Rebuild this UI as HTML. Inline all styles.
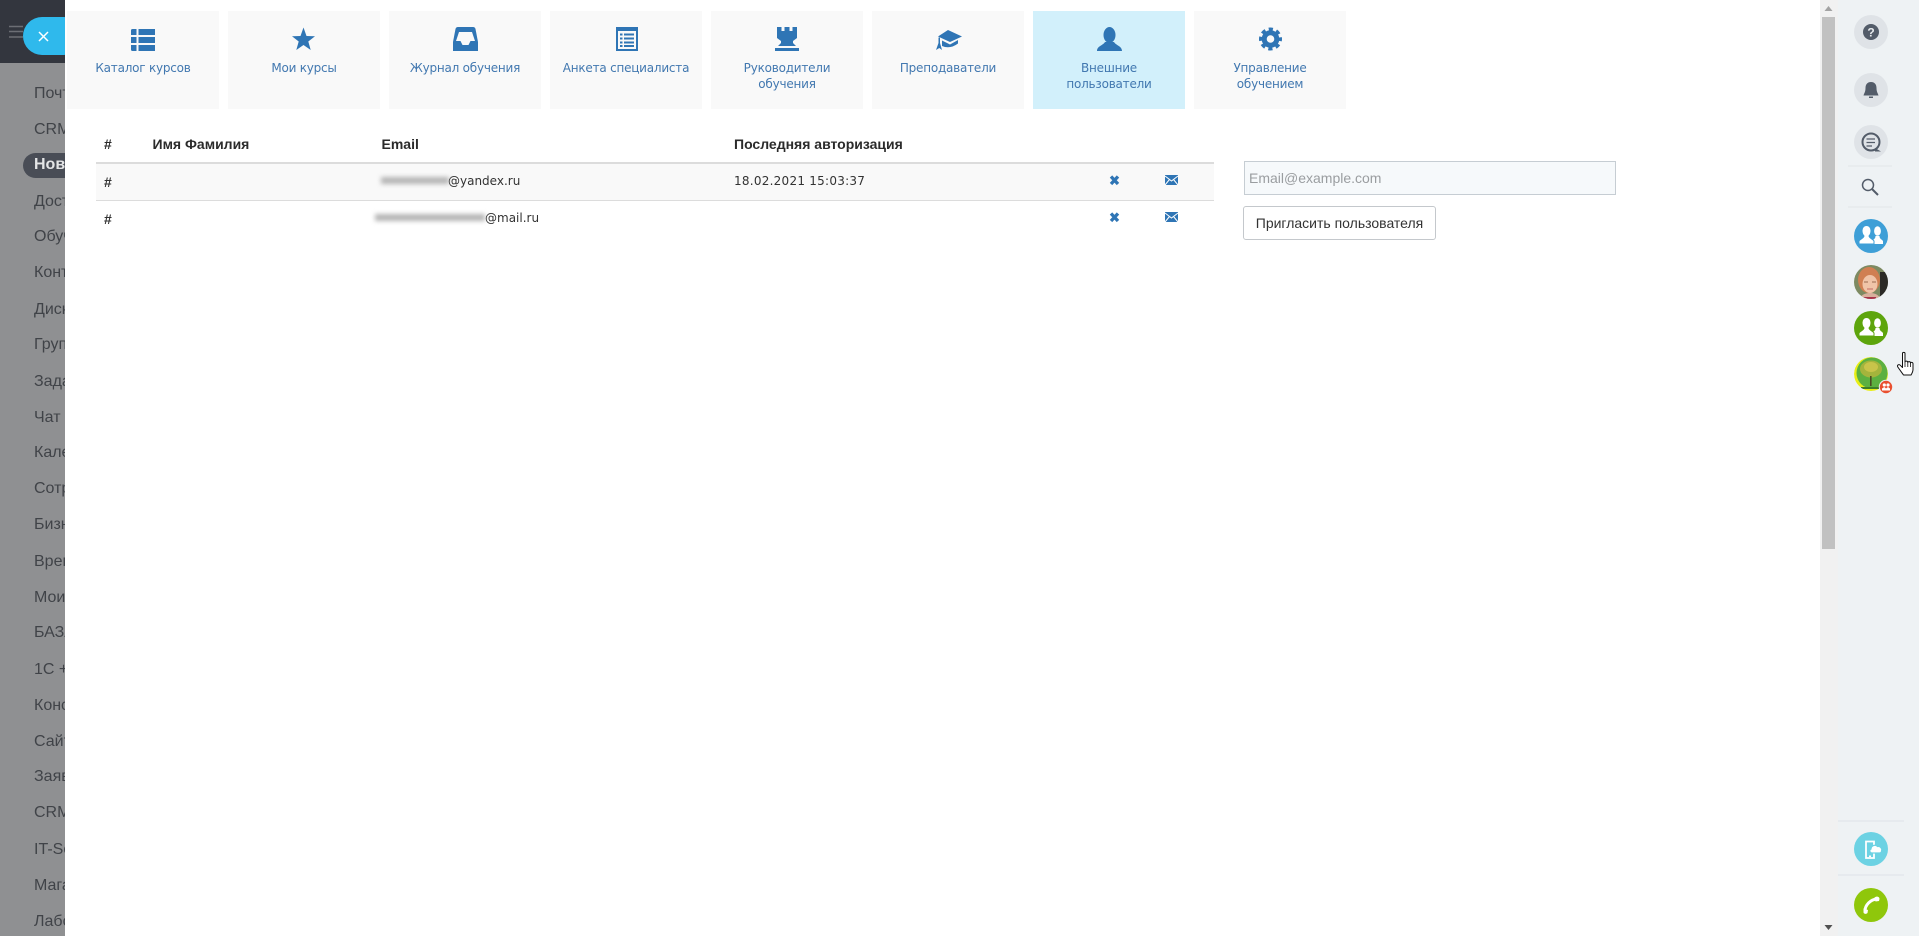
<!DOCTYPE html>
<html lang="ru">
<head>
<meta charset="utf-8">
<title>Внешние пользователи</title>
<style>
html,body{margin:0;padding:0;width:1919px;height:936px;overflow:hidden;background:#fff;}
body{position:relative;font-family:"Liberation Sans","Noto Sans CJK SC",sans-serif;}
.a{position:absolute;}
#left{left:0;top:0;width:65px;height:936px;background:#8f9092;overflow:hidden;}
#lhead{left:0;top:0;width:65px;height:63px;background:#33363e;}
.m{position:absolute;left:34px;font-size:16px;line-height:22px;color:#404348;white-space:nowrap;}
#pill{left:23px;top:153px;width:60px;height:25px;border-radius:13px;background:#494d56;}
#close{left:23px;top:17px;width:60px;height:38px;border-radius:19px;background:#2fb9ec;}
#panel{left:65px;top:0;width:1755px;height:936px;background:#fff;}
.t{position:absolute;top:11px;width:152px;height:98px;background:#f9f9f9;}
.t.on{background:#d2f0fb;}
.t span{position:absolute;left:0;right:0;top:49px;text-align:center;font-family:"DejaVu Sans",sans-serif;font-size:12px;letter-spacing:-.22px;line-height:16px;color:#4278b0;}
.h{position:absolute;top:136px;font-weight:bold;font-size:14px;line-height:17px;color:#2b2b2b;white-space:nowrap;}
.d{position:absolute;font-family:"DejaVu Sans",sans-serif;font-size:12px;line-height:16px;color:#333;white-space:nowrap;}
.n{position:absolute;left:104px;font-weight:bold;font-size:14px;line-height:17px;color:#333;}
.blur{position:absolute;height:9px;background:#b5b5b5;filter:blur(2.5px);}
#scroll{left:1820px;top:0;width:18px;height:936px;background:#f1f1f1;}
#thumb{left:1822px;top:17px;width:13px;height:532px;background:#c1c1c1;}
#right{left:1838px;top:0;width:81px;height:936px;background:#eef2f4;}
#input{left:1244px;top:161px;width:370px;height:32px;border:1px solid #c6cdd3;background:#f6f9fb;font-size:14px;line-height:32px;color:#9a9da0;text-indent:4px;}
#btn{left:1243px;top:206px;width:191px;height:32px;border:1px solid #c4c8cc;border-radius:3px;background:#fff;font-size:14px;line-height:32px;color:#333;text-align:center;}
svg{position:absolute;left:0;top:0;}
</style>
</head>
<body>
<div id="left" class="a">
  <div class="m" style="top:83px">Почта</div>
  <div class="m" style="top:119px">CRM</div>
  <div id="pill" class="a"></div>
  <div class="m" style="top:154px;color:#e4e5e6;font-weight:bold">Новости</div>
  <div class="m" style="top:191px">Доставка</div>
  <div class="m" style="top:226px">Обучение</div>
  <div class="m" style="top:262px">Контакты</div>
  <div class="m" style="top:299px">Диск</div>
  <div class="m" style="top:334px">Группы</div>
  <div class="m" style="top:371px">Задачи</div>
  <div class="m" style="top:407px">Чат и звонки</div>
  <div class="m" style="top:442px">Календарь</div>
  <div class="m" style="top:478px">Сотрудники</div>
  <div class="m" style="top:514px">Бизнес</div>
  <div class="m" style="top:551px">Время</div>
  <div class="m" style="top:587px">Мои</div>
  <div class="m" style="top:622px">БАЗА</div>
  <div class="m" style="top:659px">1С + CRM</div>
  <div class="m" style="top:695px">Конструктор</div>
  <div class="m" style="top:731px">Сайты</div>
  <div class="m" style="top:766px">Заявки</div>
  <div class="m" style="top:802px">CRM</div>
  <div class="m" style="top:839px">IT-Solution</div>
  <div class="m" style="top:875px">Магазин</div>
  <div class="m" style="top:911px">Лаборатория</div>
</div>
<div id="lhead" class="a"></div>
<div id="close" class="a"></div>

<div id="panel" class="a"></div>

<div class="t" style="left:67px"><span>Каталог курсов</span></div>
<div class="t" style="left:228px"><span>Мои курсы</span></div>
<div class="t" style="left:389px"><span>Журнал обучения</span></div>
<div class="t" style="left:550px"><span>Анкета специалиста</span></div>
<div class="t" style="left:711px"><span>Руководители<br>обучения</span></div>
<div class="t" style="left:872px"><span>Преподаватели</span></div>
<div class="t on" style="left:1033px"><span>Внешние<br>пользователи</span></div>
<div class="t" style="left:1194px"><span>Управление<br>обучением</span></div>

<div class="a" style="left:96px;top:163px;width:1118px;height:37px;background:#f9f9f9"></div>
<div class="a" style="left:96px;top:162px;width:1118px;height:2px;background:#dcdcdc"></div>
<div class="a" style="left:96px;top:200px;width:1118px;height:1px;background:#dcdcdc"></div>

<div class="h" style="left:104px">#</div>
<div class="h" style="left:152.500px">Имя Фамилия</div>
<div class="h" style="left:381.500px">Email</div>
<div class="h" style="left:734px">Последняя авторизация</div>

<div class="n" style="top:174px">#</div>
<div class="n" style="top:211px">#</div>

<div class="blur" style="left:381px;top:177px;width:68px;height:7px"></div>
<div class="d" style="left:448px;top:173px">@yandex.ru</div>
<div class="d" style="left:734px;top:173px;letter-spacing:.25px">18.02.2021 15:03:37</div>

<div class="blur" style="left:375px;top:214px;width:110px;height:7px"></div>
<div class="d" style="left:485px;top:210px">@mail.ru</div>

<div id="input" class="a">Email@example.com</div>
<div id="btn" class="a">Пригласить пользователя</div>

<div id="scroll" class="a"></div>
<div id="thumb" class="a"></div>
<div id="right" class="a"></div>

<svg width="1919" height="936" viewBox="0 0 1919 936" xmlns="http://www.w3.org/2000/svg">
  <!-- hamburger -->
  <path d="M9 26.5H23M9 31.5H23M9 37H23" stroke="#6c6e74" stroke-width="1.6" fill="none"/>
  <!-- close -->
  <path d="M39 32L48 41M48 32L39 41" stroke="#fff" stroke-width="1.5" fill="none"/>

  <g fill="#2f75b5">
    <!-- list -->
    <path d="M131 30.5a1.5 1.5 0 0 1 1.5-1.5h4v6h-5.500zM131 37h5.500v6H131zM131 45h5.500v6h-4a1.500 1.500 0 0 1-1.500-1.500zM138.500 29H155v6h-16.500zM138.500 37H155v6h-16.500zM138.500 45H155v6h-16.500z"/>
    <!-- star -->
    <path d="M303.500 27.500L306.500 36L315 36.300L308.300 41.500L310.700 50L303.500 45L296.300 50L298.700 41.500L292 36.300L300.500 36Z"/>
    <!-- inbox -->
    <path d="M458 27H473Q475 27 475.500 29L478 42V51H453V42L455.500 29Q456 27 458 27Z"/>
    <!-- form -->
    <path d="M616 27H638V51H616Z"/>
    <!-- rook -->
    <path d="M777 27h4.500v4h3v-4h5v4h3v-4H797v11l-4 3v2l3 3H778l3-3v-2l-4-3Z"/>
    <path d="M775 48H799V51H775Z"/>
    <!-- cap -->
    <path d="M948 30L962 36.500L950 42L938 36.500Z"/>
    <path d="M942 40.500L950 44.500L958 40V43.500Q950 49.500 942 46Z"/>
    <path d="M938.500 37.500H940V43L942 50L939.300 48L936 50L938.500 43Z"/>
    <!-- user -->
    <ellipse cx="1109.500" cy="35" rx="6" ry="8"/>
    <path d="M1097 51C1097 46 1103 45.500 1105 42H1114C1116 45.500 1122 46 1122 51Z"/>
  </g>
  <!-- inbox inner -->
  <path d="M459 32H472L475 41H470.500L468.500 45H462.500L460.500 41H456Z" fill="#f9f9f9"/>
  <!-- form inner -->
  <path d="M618 31H636V49H618Z" fill="#f9f9f9"/>
  <path d="M620 33.500H622.500V35.500H620zM624 33.500H634V35.500H624zM620 37.500H622.500V39.500H620zM624 37.500H634V39.500H624zM620 41.500H622.500V43.500H620zM624 41.500H634V43.500H624zM620 45H622.500V47H620zM624 45H634V47H624z" fill="#2f75b5"/>
  <!-- cog -->
  <circle cx="1270.500" cy="39" r="6.300" fill="none" stroke="#2f75b5" stroke-width="5"/>
  <circle cx="1270.500" cy="39" r="9.800" fill="none" stroke="#2f75b5" stroke-width="3.400" stroke-dasharray="4.200 3.500" stroke-dashoffset="2.100"/>

  <!-- row actions -->
  <g stroke="#2f75b5" stroke-width="3.300" fill="none">
    <path d="M1111 176.500L1118 184M1118 176.500L1111 184"/>
    <path d="M1111 213.500L1118 221M1118 213.500L1111 221"/>
  </g>
  <g>
    <rect x="1165" y="175" width="13" height="10" fill="#2f75b5"/>
    <path d="M1165 176L1171.500 181L1178 176M1165 185L1169.500 179.500M1178 185L1173.500 179.500" stroke="#fff" stroke-width="1" fill="none"/>
    <rect x="1165" y="212" width="13" height="10" fill="#2f75b5"/>
    <path d="M1165 213L1171.500 218L1178 213M1165 222L1169.500 216.500M1178 222L1173.500 216.500" stroke="#fff" stroke-width="1" fill="none"/>
  </g>

  <!-- scrollbar arrows -->
  <path d="M1828.500 6L1832.500 11H1824.500Z" fill="#a3a3a3"/>
  <path d="M1824.500 925H1832.500L1828.500 930Z" fill="#505050"/>

  <!-- right panel -->
  <g fill="#dfe3e7">
    <circle cx="1871" cy="32" r="17"/>
    <circle cx="1871" cy="90" r="17"/>
    <circle cx="1871" cy="142" r="17"/>
  </g>
  <circle cx="1871" cy="32" r="8" fill="#535c69"/>
  <text x="1871" y="36.500" text-anchor="middle" font-family="Liberation Sans, sans-serif" font-weight="bold" font-size="12" fill="#e8ebee">?</text>
  <path d="M1871 82C1875 82 1876.500 85 1876.500 88C1876.500 92 1878 93.500 1878.500 95.500H1863.500C1864 93.500 1865.500 92 1865.500 88C1865.500 85 1867 82 1871 82Z" fill="#535c69"/>
  <rect x="1869" y="96.500" width="4" height="1.500" fill="#535c69"/>
  <circle cx="1871" cy="142" r="8.500" fill="none" stroke="#535c69" stroke-width="2"/>
  <path d="M1875 148L1881 151.500L1875 151.500Z" fill="#535c69"/>
  <path d="M1866.500 139H1875M1866.500 142.500H1875M1866.500 146H1872" stroke="#535c69" stroke-width="1.300" fill="none"/>
  <circle cx="1868" cy="185" r="5.500" fill="none" stroke="#535c69" stroke-width="1.500"/>
  <path d="M1872 189L1878 195" stroke="#535c69" stroke-width="2" fill="none"/>
  <path d="M1848 166H1892M1848 207H1892" stroke="#e1e5e9" stroke-width="1"/>
  <path d="M1838 821H1904M1838 875H1904" stroke="#dde2e7" stroke-width="1"/>

  <!-- blue group -->
  <circle cx="1871" cy="236" r="17" fill="#3e9fd7"/>
  <g fill="#fff">
    <ellipse cx="1877.500" cy="231" rx="3.400" ry="4.800"/>
    <path d="M1872 244V241C1873 239.500 1875.500 239 1875.500 236H1879.500C1879.500 239 1882 239.500 1883 241V244Z"/>
    <path d="M1859 244V241C1860 239 1863.500 238.500 1864 236C1862.500 234.500 1862 232.500 1862 230.500C1862 227.500 1864 225.500 1866.500 225.500C1869 225.500 1871 227.500 1871 230.500C1871 232.500 1870.500 234.500 1869 236C1869.500 238.500 1873 239 1874 241V244Z" stroke="#3e9fd7" stroke-width="1"/>
  </g>

  <!-- photo avatar -->
  <defs>
    <clipPath id="c1"><circle cx="1871" cy="282" r="17"/></clipPath>
    <clipPath id="c2"><circle cx="1871" cy="374" r="17"/></clipPath>
  </defs>
  <g clip-path="url(#c1)">
    <rect x="1854" y="265" width="34" height="34" fill="#7d8a62"/>
    <rect x="1880" y="272" width="8" height="27" fill="#2b2a26"/>
    <ellipse cx="1869" cy="280" rx="11" ry="13" fill="#d07f52"/>
    <ellipse cx="1870" cy="284" rx="7.500" ry="9" fill="#f0c4a8"/>
    <path d="M1864 282H1868M1872 282H1876" stroke="#9a6a50" stroke-width="1"/>
    <path d="M1867 289H1873" stroke="#c26a62" stroke-width="1"/>
    <path d="M1859 299C1862 294 1866 293 1870 293C1874 293 1878 294 1881 299Z" fill="#d8b09c"/>
    <rect x="1862" y="297" width="14" height="2" fill="#a8344a"/>
  </g>

  <!-- green group -->
  <circle cx="1871" cy="328" r="17" fill="#5da50c"/>
  <g fill="#fff">
    <ellipse cx="1877.500" cy="323" rx="3.400" ry="4.800"/>
    <path d="M1872 336V333C1873 331.500 1875.500 331 1875.500 328H1879.500C1879.500 331 1882 331.500 1883 333V336Z"/>
    <path d="M1859 336V333C1860 331 1863.500 330.500 1864 328C1862.500 326.500 1862 324.500 1862 322.500C1862 319.500 1864 317.500 1866.500 317.500C1869 317.500 1871 319.500 1871 322.500C1871 324.500 1870.500 326.500 1869 328C1869.500 330.500 1873 331 1874 333V336Z" stroke="#5da50c" stroke-width="1"/>
  </g>

  <!-- tree avatar -->
  <g clip-path="url(#c2)">
    <circle cx="1871" cy="374" r="17" fill="#e8ee16"/>
    <circle cx="1872" cy="373" r="15.500" fill="#5cb040"/>
    <ellipse cx="1871" cy="369" rx="11" ry="8.500" fill="#a4b43c"/>
    <ellipse cx="1871" cy="367" rx="7" ry="5" fill="#c8c44a"/>
    <path d="M1870 376H1871.600V386H1870Z" fill="#4c4a22"/>
    <path d="M1861 387H1880V389H1861Z" fill="#3f7d2a"/>
  </g>
  <circle cx="1886" cy="387" r="6.700" fill="#e9502f" stroke="#eef2f4" stroke-width="1"/>
  <g fill="#fff">
    <circle cx="1884.300" cy="385" r="1.600"/>
    <circle cx="1888" cy="385" r="1.600"/>
    <path d="M1882 390.500V388.500L1884.300 387L1886 388.500L1888 387L1890 388.500V390.500Z"/>
  </g>

  <!-- hand cursor -->
  <path d="M1902.500 353.500C1902.500 352 1905 352 1905 353.500V362C1905 360.800 1907.800 360.800 1907.800 362.500C1907.800 361.300 1910.500 361.300 1910.500 363C1910.500 362 1913 362 1913 363.800V369.500C1913 372 1911.500 374 1911 375H1903.500C1902.500 373.500 1899.500 369.500 1897.800 367C1896.800 365 1899 363.800 1900.300 365.300L1902.500 367.500Z" fill="#fff" stroke="#111" stroke-width="1" stroke-linejoin="round"/>
  <path d="M1905 362V367M1907.800 362.500V367M1910.500 363V367" stroke="#111" stroke-width=".8" fill="none"/>

  <!-- teal phone/cloud -->
  <circle cx="1871" cy="849" r="17" fill="#6cd2e3"/>
  <path d="M1866 841.500H1874V858H1866Z" fill="none" stroke="#fff" stroke-width="1.800"/>
  <rect x="1869" y="855.500" width="2" height="1.500" fill="#fff"/>
  <path d="M1872 853C1869.500 853 1869 849.500 1871 849C1871 845.500 1875.500 844 1877.500 846.500C1880.500 846 1882.500 849 1881.500 851C1881.500 852.300 1880.500 853 1879.500 853Z" fill="#fff" stroke="#6cd2e3" stroke-width="1.200"/>

  <!-- green call -->
  <circle cx="1871" cy="905" r="17" fill="#8fc70b"/>
  <path d="M1865 911C1865 905 1870.500 899.500 1877 899" fill="none" stroke="#fff" stroke-width="3"/>
  <path d="M1863.500 908.500L1868 910L1867.500 913C1866 914.500 1864 914 1863.500 912.500ZM1874.500 897.500C1876.500 896 1879.500 896.500 1879.500 899L1879 901L1875.500 901.500Z" fill="#fff"/>
</svg>
</body>
</html>
